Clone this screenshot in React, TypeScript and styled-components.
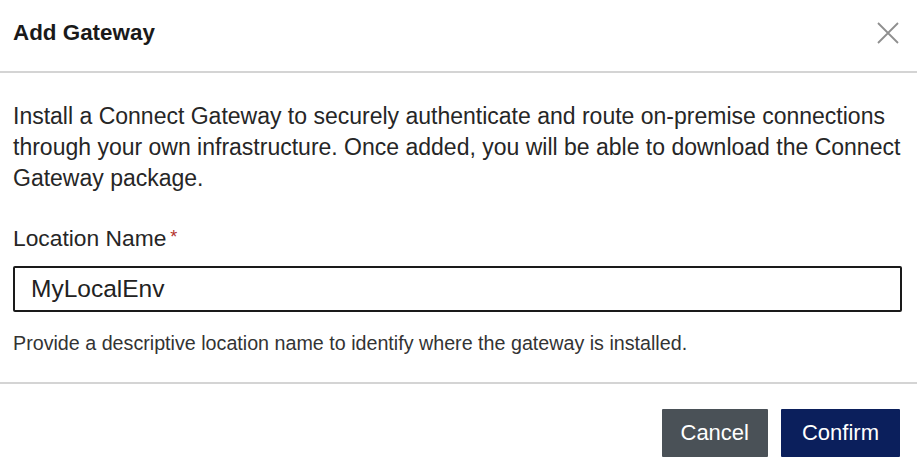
import React from "react";
import styled, { createGlobalStyle } from "styled-components";

const GlobalStyle = createGlobalStyle`
  html, body {
    margin: 0;
    padding: 0;
    background: #ffffff;
  }
  body {
    font-family: "Liberation Sans", Arial, sans-serif;
    color: #1f1f1f;
  }
`;

const Dialog = styled.div`
  width: 917px;
  height: 470px;
  background: #fff;
  display: flex;
  flex-direction: column;
`;

const Header = styled.div`
  display: flex;
  align-items: center;
  justify-content: space-between;
  height: 71px;
  padding: 0 16px 0 13px;
  border-bottom: 2px solid #d4d4d4;
`;

const Title = styled.h2`
  margin: 0;
  font-size: 22.4px;
  font-weight: 700;
  color: #1a1a1a;
  padding-bottom: 5px;
`;

const CloseButton = styled.button`
  border: none;
  background: none;
  padding: 0;
  width: 26px;
  height: 26px;
  cursor: pointer;
  display: flex;
  align-items: center;
  justify-content: center;
  margin-bottom: 5px;
`;

const Body = styled.div`
  padding: 28px 12px 0 13px;
  display: flex;
  flex-direction: column;
  border-bottom: 2px solid #d4d4d4;
  height: 311px;
  box-sizing: border-box;
`;

const Intro = styled.p`
  margin: 0;
  font-size: 23px;
  line-height: 31px;
  color: #262626;
`;

const Label = styled.label`
  margin-top: 30px;
  font-size: 22.8px;
  line-height: 26px;
  color: #262626;
`;

const Required = styled.span`
  color: #b3312b;
  margin-left: 4px;
  font-size: 18px;
  vertical-align: 3px;
`;

const Input = styled.input`
  margin-top: 15px;
  margin-right: 3px;
  height: 46px;
  box-sizing: border-box;
  border: 2px solid #1a1a1a;
  border-radius: 2px;
  padding: 0 16px;
  font-family: "Liberation Sans", Arial, sans-serif;
  font-size: 24.5px;
  color: #222;
  outline: none;
  caret-color: #222;
`;

const Helper = styled.div`
  margin-top: 20px;
  font-size: 19.7px;
  line-height: 23px;
  color: #333;
`;

const Footer = styled.div`
  display: flex;
  justify-content: flex-end;
  gap: 13px;
  padding: 25px 17px 0 0;
`;

const Button = styled.button<{ $variant: "secondary" | "primary" }>`
  height: 48px;
  padding: 0 ${(p) => (p.$variant === "primary" ? 21 : 19)}px;
  border: none;
  border-radius: 1px;
  font-family: "Liberation Sans", Arial, sans-serif;
  font-size: 22px;
  color: #fff;
  cursor: pointer;
  background: ${(p) => (p.$variant === "primary" ? "#0b1f5c" : "#4a5157")};
`;

export default function App() {
  return (
    <>
      <GlobalStyle />
      <Dialog>
        <Header>
          <Title>Add Gateway</Title>
          <CloseButton aria-label="Close">
            <svg width="24" height="24" viewBox="0 0 24 24">
              <path d="M2 2 L22 22 M22 2 L2 22" stroke="#8f8f8f" strokeWidth="1.8" fill="none" />
            </svg>
          </CloseButton>
        </Header>
        <Body>
          <Intro>
            Install a Connect Gateway to securely authenticate and route on-premise connections
            through your own infrastructure. Once added, you will be able to download the Connect
            Gateway package.
          </Intro>
          <Label htmlFor="loc">
            Location Name<Required>*</Required>
          </Label>
          <Input id="loc" defaultValue="MyLocalEnv" autoFocus />
          <Helper>Provide a descriptive location name to identify where the gateway is installed.</Helper>
        </Body>
        <Footer>
          <Button $variant="secondary">Cancel</Button>
          <Button $variant="primary">Confirm</Button>
        </Footer>
      </Dialog>
    </>
  );
}
